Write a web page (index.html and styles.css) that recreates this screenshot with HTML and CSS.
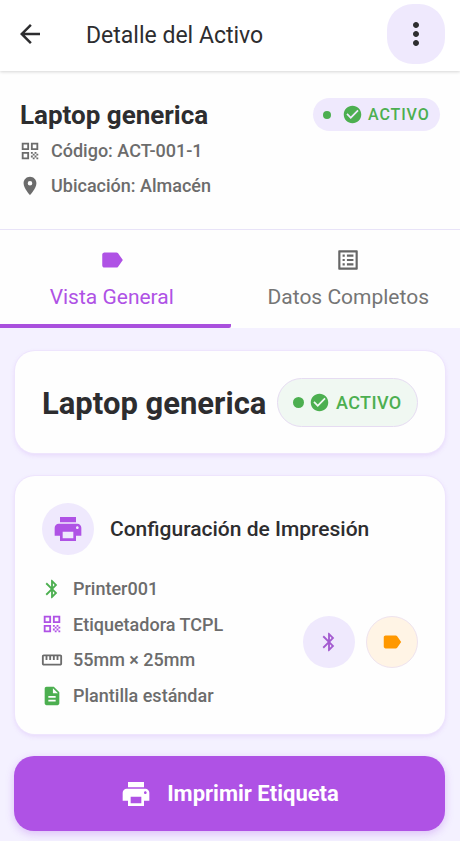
FILE: index.html
```html
<!DOCTYPE html>
<html lang="es">
<head>
<meta charset="utf-8">
<title>Detalle del Activo</title>
<link rel="stylesheet" href="styles.css">
</head>
<body>
<svg class="defs" aria-hidden="true">
  <symbol id="i-back" viewBox="0 0 24 24"><path d="M20 11H7.83l5.59-5.59L12 4l-8 8 8 8 1.41-1.41L7.83 13H20v-2z"/></symbol>
  <symbol id="i-more" viewBox="0 0 24 24"><path d="M12 8c1.1 0 2-.9 2-2s-.9-2-2-2-2 .9-2 2 .9 2 2 2zm0 2c-1.1 0-2 .9-2 2s.9 2 2 2 2-.9 2-2-.9-2-2-2zm0 6c-1.1 0-2 .9-2 2s.9 2 2 2 2-.9 2-2-.9-2-2-2z"/></symbol>
  <symbol id="i-check" viewBox="0 0 24 24"><path d="M12 2C6.48 2 2 6.48 2 12s4.48 10 10 10 10-4.48 10-10S17.52 2 12 2zm-2 15l-5-5 1.41-1.41L10 14.17l7.59-7.59L19 8l-9 9z"/></symbol>
  <symbol id="i-qr" viewBox="0 0 24 24"><path d="M3 11h8V3H3v8zm2-6h4v4H5V5zM3 21h8v-8H3v8zm2-6h4v4H5v-4zM13 3v8h8V3h-8zm6 6h-4V5h4v4zM19 19h2v2h-2zM13 13h2v2h-2zM15 15h2v2h-2zM13 17h2v2h-2zM15 19h2v2h-2zM17 17h2v2h-2zM17 13h2v2h-2zM19 15h2v2h-2z"/></symbol>
  <symbol id="i-place" viewBox="0 0 24 24"><path d="M12 2C8.13 2 5 5.13 5 9c0 5.25 7 13 7 13s7-7.75 7-13c0-3.87-3.13-7-7-7zm0 9.500a2.500 2.500 0 0 1 0-5 2.500 2.500 0 0 1 0 5z"/></symbol>
  <symbol id="i-label" viewBox="0 0 24 24"><path d="M17.630 5.840C17.270 5.330 16.670 5 16 5L5 5.010C3.900 5.010 3 5.900 3 7v10c0 1.100.9 1.990 2 1.990L16 19c.670 0 1.270-.330 1.630-.840L22 12l-4.370-6.160z"/></symbol>
  <symbol id="i-list" viewBox="0 0 24 24"><path d="M19 5v14H5V5h14m1.100-2H3.900c-.5 0-.9.4-.9.9v16.200c0 .4.4.9.9.9h16.200c.4 0 .9-.5.9-.9V3.900c0-.5-.5-.9-.9-.9zM11 7h6v2h-6V7zm0 4h6v2h-6v-2zm0 4h6v2h-6v-2zM7 7h2v2H7V7zm0 4h2v2H7v-2zm0 4h2v2H7v-2z"/></symbol>
  <symbol id="i-print" viewBox="0 0 24 24"><path d="M19 8H5c-1.660 0-3 1.340-3 3v6h4v4h12v-4h4v-6c0-1.660-1.340-3-3-3zm-3 11H8v-5h8v5zm3-7c-.550 0-1-.450-1-1s.450-1 1-1 1 .450 1 1-.450 1-1 1zm-1-9H6v4h12V3z"/></symbol>
  <symbol id="i-bt" viewBox="0 0 24 24"><path d="M17.710 7.710L12 2h-1v7.590L6.410 5 5 6.410 10.590 12 5 17.590 6.410 19 11 14.410V22h1l5.710-5.710-4.300-4.290 4.300-4.290zM13 5.830l1.880 1.880L13 9.590V5.830zm1.880 10.460L13 18.170v-3.760l1.880 1.880z"/></symbol>
  <symbol id="i-ruler" viewBox="0 0 24 24"><path d="M21 6H3c-1.100 0-2 .9-2 2v8c0 1.100.9 2 2 2h18c1.100 0 2-.9 2-2V8c0-1.100-.9-2-2-2zm0 10H3V8h2v4h2V8h2v4h2V8h2v4h2V8h2v4h2V8h2v8z"/></symbol>
  <symbol id="i-doc" viewBox="0 0 24 24"><path d="M14 2H6c-1.100 0-1.990.9-1.990 2L4 20c0 1.100.890 2 1.990 2H18c1.100 0 2-.9 2-2V8l-6-6zm2 16H8v-2h8v2zm0-4H8v-2h8v2zm-3-5V3.500L18.500 9H13z"/></symbol>
</svg>

<header class="appbar">
  <svg class="back"><use href="#i-back"/></svg>
  <h1 class="appbar-title"><span>Detalle del Activo</span></h1>
  <button class="more"><svg><use href="#i-more"/></svg></button>
</header>

<section class="summary">
  <div class="summary-top">
    <h2 class="summary-name"><span>Laptop generica</span></h2>
    <div class="chip"><i class="dot"></i><svg><use href="#i-check"/></svg><span>ACTIVO</span></div>
  </div>
  <div class="meta"><svg><use href="#i-qr"/></svg><span class="t-code">Código: ACT-001-1</span></div>
  <div class="meta"><svg class="pin"><use href="#i-place"/></svg><span class="t-place">Ubicación: Almacén</span></div>
</section>

<nav class="tabs">
  <a class="tab active"><svg><use href="#i-label"/></svg><span>Vista General</span></a>
  <a class="tab"><svg><use href="#i-list"/></svg><span>Datos Completos</span></a>
</nav>

<main class="content">
  <section class="card hero">
    <h2 class="hero-name"><span>Laptop generica</span></h2>
    <div class="chip large"><i class="dot"></i><svg><use href="#i-check"/></svg><span>ACTIVO</span></div>
  </section>

  <section class="card print">
    <div class="print-head">
      <div class="circle"><svg class="printer"><use href="#i-print"/></svg></div>
      <h3><span>Configuración de Impresión</span></h3>
    </div>
    <div class="print-body">
      <ul class="specs">
        <li><svg class="green"><use href="#i-bt"/></svg><span>Printer001</span></li>
        <li><svg class="purple"><use href="#i-qr"/></svg><span>Etiquetadora TCPL</span></li>
        <li><svg><use href="#i-ruler"/></svg><span>55mm × 25mm</span></li>
        <li><svg class="green"><use href="#i-doc"/></svg><span>Plantilla estándar</span></li>
      </ul>
      <div class="actions">
        <button class="circle"><svg><use href="#i-bt"/></svg></button>
        <button class="circle orange"><svg><use href="#i-label"/></svg></button>
      </div>
    </div>
  </section>

  <button class="primary"><svg><use href="#i-print"/></svg><span>Imprimir Etiqueta</span></button>
</main>
</body>
</html>
```
FILE: styles.css
```css
* { box-sizing: border-box; margin: 0; padding: 0; }
html, body { height: 841px; overflow: hidden; }
body {
  display: flex;
  flex-direction: column;
  background: #f4f1ff;
  color: #2d2d2f;
  font-family: Roboto, "Liberation Sans", sans-serif;
}
svg { display: block; flex: none; fill: currentColor; }
button { border: 0; font: inherit; }
span { white-space: nowrap; }
.defs { display: none; }

.appbar {
  position: relative;
  z-index: 1;
  flex: none;
  display: flex;
  align-items: center;
  height: 71px;
  padding: 0 15px;
  background: #fff;
  box-shadow: 0 1px 3px rgba(0, 0, 0, .16);
}
.back { width: 30px; height: 30px; margin-top: -3px; }
.appbar-title {
  flex: 1;
  margin-left: 41px;
  font-size: 23px;
  font-weight: 400;
  line-height: 30px;
}
.more {
  display: flex;
  align-items: center;
  justify-content: center;
  width: 58px;
  height: 60px;
  margin-top: -3px;
  border-radius: 26px;
  background: #efe9fd;
  color: #2d2d2f;
}
.more svg { width: 37px; height: 37px; }
.more svg { width: 36px; height: 36px; }

.summary {
  flex: none;
  height: 159px;
  padding: 25px 20px 0 20px;
  background: #fefefe;
  border-bottom: 1px solid #e8e3f8;
}
.summary-top { display: flex; justify-content: space-between; align-items: center; height: 37px; }
.summary-name { font-size: 26px; font-weight: 700; line-height: 36px; }
.chip {
  display: flex;
  align-items: center;
  width: 127px;
  height: 33px;
  padding-left: 10px;
  border-radius: 16.500px;
  background: #efe9fd;
  color: #4caf50;
  font-size: 16px;
  font-weight: 500;
  letter-spacing: .9px;
}
.dot { width: 8px; height: 8px; border-radius: 50%; background: currentColor; }
.chip svg { width: 21px; height: 21px; margin: 0 5px 0 11px; }
.meta {
  display: flex;
  align-items: center;
  gap: 10px;
  height: 35px;
  margin-left: -1px;
  color: #6c6c6c;
  font-size: 18px;
  font-weight: 500;
}
.meta svg { width: 22px; height: 22px; }

.tabs { flex: none; display: flex; height: 98px; background: #fefefe; }
.tab {
  flex: 1;
  display: flex;
  flex-direction: column;
  align-items: center;
  padding-top: 17px;
  color: #757575;
  font-size: 21px;
  line-height: 26px;
}
.tab + .tab { padding-left: 6px; }
.tab svg { width: 26px; height: 26px; margin-bottom: 11px; }
.tab:not(.active) svg { color: #666; }
.tab.active {
  padding-right: 7px;
  color: #af52e5;
  border-bottom: 4px solid #a94fdd;
  border-bottom-right-radius: 2px;
}

.content { flex: 1; padding: 23px 15px 0; }
.card {
  border-radius: 20px;
  background: #fefefe;
  box-shadow: 0 0 0 1px #eee5fd, 0 2px 5px rgba(160, 70, 230, .17);
}
.hero {
  display: flex;
  align-items: center;
  justify-content: space-between;
  height: 102px;
  padding: 0 27px;
}
.hero-name { font-size: 31px; line-height: 40px; padding-top: 4px; }
.chip.large {
  width: 141px;
  height: 49px;
  padding-left: 15px;
  border: 1px solid #e6dcf2;
  border-radius: 24.500px;
  background: #f0f8f2;
  font-size: 18px;
  letter-spacing: .4px;
}
.large .dot { width: 11px; height: 11px; }
.large svg { margin: 0 6px 0 5px; }

.print { height: 258px; margin-top: 23px; padding: 27px; }
.print-head { display: flex; align-items: center; gap: 16px; }
.print-head h3 { font-size: 21px; font-weight: 500; line-height: 28px; }
.circle {
  display: flex;
  align-items: center;
  justify-content: center;
  width: 52px;
  height: 52px;
  border-radius: 50%;
  background: #efe9fd;
  color: #af52e5;
}
.printer { width: 32px; height: 32px; }
.print-body { display: flex; justify-content: space-between; align-items: center; margin-top: 16px; }
.specs { list-style: none; color: #6c6c6c; font-size: 18px; font-weight: 500; }
.specs li { display: flex; align-items: center; gap: 10px; height: 35.600px; margin-left: -1px; }
.specs svg { width: 22px; height: 22px; }
.specs .green { color: #4caf50; }
.specs .purple { color: #af52e5; }
.actions { display: flex; gap: 11px; }
.actions svg { width: 22px; height: 22px; color: #a45bd0; }
.circle.orange { background: #fff4e5; border: 1px solid #efe3ee; }
.circle.orange svg { color: #ff9800; }

.primary {
  display: flex;
  align-items: center;
  justify-content: center;
  gap: 15px;
  width: 431px;
  height: 75px;
  margin: 22px 0 0 -1px;
  border-radius: 20px;
  background: #af52e5;
  box-shadow: 0 3px 9px rgba(160, 70, 230, .28);
  color: #fff;
  font-size: 22px;
  font-weight: 700;
}
.primary svg { width: 32px; height: 32px; }
```
